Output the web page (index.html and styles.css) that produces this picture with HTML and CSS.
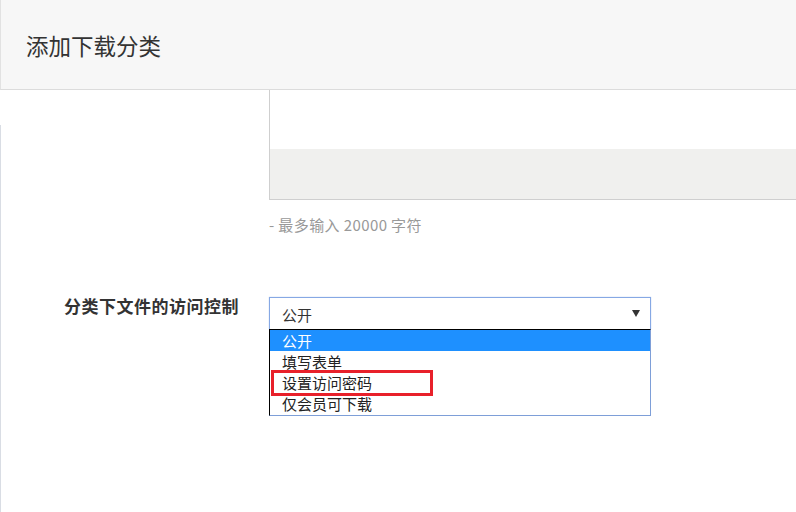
FILE: index.html
```html
<!DOCTYPE html>
<html lang="zh-CN">
<head>
<meta charset="utf-8">
<title>添加下载分类</title>
<link rel="stylesheet" href="styles.css">
</head>
<body>
<div class="page">
  <header class="head">
    <h1 class="title">添加下载分类</h1>
  </header>
  <div class="main">
    <div class="rail"></div>
    <div class="form">
      <div class="row">
        <div class="label"></div>
        <div class="field">
          <div class="textarea">
            <div class="ta-blank"></div>
            <div class="ta-grey"></div>
          </div>
          <div class="hint">- 最多输入 20000 字符</div>
        </div>
      </div>
      <div class="row row-access">
        <div class="label label-bold">分类下文件的访问控制</div>
        <div class="field">
          <div class="select-wrap">
            <div class="select">
              <span class="select-value">公开</span>
              <svg class="arrow" width="8" height="7" viewBox="0 0 8 7"><path d="M0 0H8L4 7Z" fill="#333"/></svg>
            </div>
            <ul class="dropdown">
              <li class="opt opt-active">公开</li>
              <li class="opt">填写表单</li>
              <li class="opt">设置访问密码</li>
              <li class="opt">仅会员可下载</li>
            </ul>
            <div class="mark"></div>
          </div>
        </div>
      </div>
    </div>
  </div>
</div>
</body>
</html>
```

FILE: styles.css
```css
html, body {
  margin: 0;
  padding: 0;
  background: #fff;
  overflow: hidden;
}
body {
  font-family: "Noto Sans CJK SC", "Noto Sans", sans-serif;
  color: #333;
}
.page {
  width: 796px;
  height: 512px;
  display: flex;
  flex-direction: column;
}
.head {
  height: 89px;
  background: #f7f7f7;
  border-bottom: 1px solid #dcdcdc;
  border-left: 1px solid #e2e2e2;
  display: flex;
  align-items: center;
  padding-left: 25px;
}
.title {
  margin: 0;
  font-size: 22.5px;
  font-weight: normal;
  color: #333;
  line-height: 30px;
}
.main {
  flex: 1;
  display: flex;
}
.rail {
  width: 1px;
  margin-top: 35px;
  background: #d9dde4;
}
.form {
  flex: 1;
  display: flex;
  flex-direction: column;
}
.row {
  display: grid;
  grid-template-columns: 268px 1fr;
}
.field {
  display: flex;
  flex-direction: column;
}
.textarea {
  height: 109px;
  border-left: 1px solid #cfcfcf;
  border-bottom: 1px solid #cfcfcf;
  display: flex;
  flex-direction: column;
}
.ta-blank {
  height: 59px;
  background: #fff;
}
.ta-grey {
  flex: 1;
  background: #f0f0ee;
}
.hint {
  margin-top: 15px;
  font-size: 15px;
  line-height: 20px;
  letter-spacing: 0.4px;
  color: #999;
}
.row-access {
  margin-top: 62px;
}
.label {
  text-align: right;
  padding-right: 30px;
}
.label-bold {
  font-size: 17px;
  font-weight: bold;
  line-height: 18px;
  color: #333;
  letter-spacing: 0.5px;
}
.select-wrap {
  position: relative;
  width: 382px;
}
.select {
  height: 32px;
  box-sizing: border-box;
  border: 1px solid #86a8e4;
  border-bottom: none;
  display: flex;
  align-items: center;
  justify-content: space-between;
  padding: 0 10px 0 12px;
  font-size: 15px;
  color: #333;
  box-shadow: 0 0 1px #a9c4ee;
}
.select-value {
  line-height: 20px;
  padding-top: 2px;
}
.arrow {
  display: block;
}
.dropdown {
  list-style: none;
  margin: 0;
  padding: 0 0 1px 0;
  border-top: 1px solid #000;
  border-left: 1px solid #000;
  border-right: 1px solid #7e9fd8;
  border-bottom: 1px solid #7e9fd8;
}
.opt {
  height: 21px;
  line-height: 21px;
  padding-left: 12px;
  font-size: 15px;
  color: #222;
}
.opt-active {
  background: #1e90ff;
  color: #fff;
}
.mark {
  position: absolute;
  left: 2px;
  top: 73px;
  width: 156px;
  height: 20px;
  border: 3px solid #e8202a;
}
```
